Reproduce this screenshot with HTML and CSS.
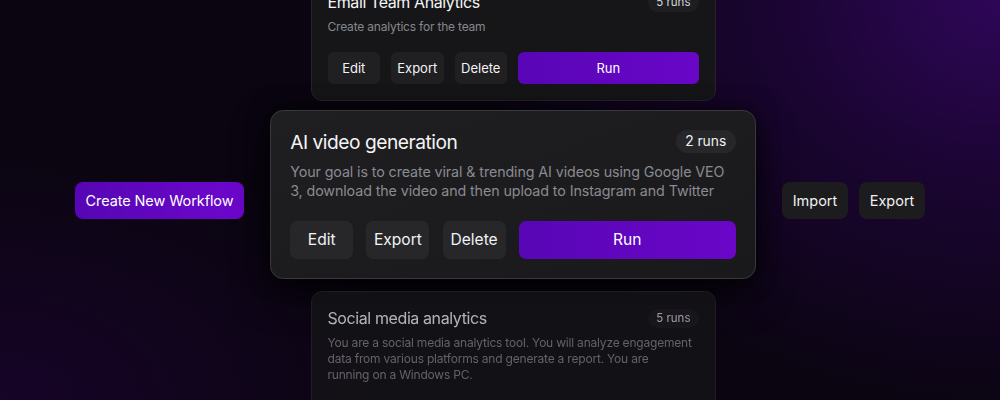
FILE: index.html
```html
<!DOCTYPE html>
<html lang="en">
<head>
<meta charset="utf-8">
<title>Workflows</title>
<link rel="stylesheet" href="styles.css">
</head>
<body>
<main class="stage">
  <button class="btn-primary create">Create New Workflow</button>

  <section class="stack">
    <article class="card side top">
      <header class="card-head">
        <h2 class="card-title">Email Team Analytics</h2>
        <span class="badge">5 runs</span>
      </header>
      <p class="card-desc">Create analytics for the team</p>
      <div class="actions">
        <button class="btn">Edit</button>
        <button class="btn">Export</button>
        <button class="btn">Delete</button>
        <button class="btn run">Run</button>
      </div>
    </article>

    <article class="card focus">
      <header class="card-head">
        <h2 class="card-title">AI video generation</h2>
        <span class="badge">2 runs</span>
      </header>
      <p class="card-desc">Your goal is to create viral &amp; trending AI videos using Google VEO 3, download the video and then upload to Instagram and Twitter</p>
      <div class="actions">
        <button class="btn">Edit</button>
        <button class="btn">Export</button>
        <button class="btn">Delete</button>
        <button class="btn run">Run</button>
      </div>
    </article>

    <article class="card side bottom">
      <header class="card-head">
        <h2 class="card-title">Social media analytics</h2>
        <span class="badge">5 runs</span>
      </header>
      <p class="card-desc">You are a social media analytics tool. You will analyze engagement data from various platforms and generate a report. You are<br>running on a Windows PC.</p>
      <div class="actions">
        <button class="btn">Edit</button>
        <button class="btn">Export</button>
        <button class="btn">Delete</button>
        <button class="btn run">Run</button>
      </div>
    </article>
  </section>

  <div class="tools">
    <button class="btn-dark">Import</button>
    <button class="btn-dark">Export</button>
  </div>
</main>
</body>
</html>
```

FILE: styles.css
```css
* { box-sizing: border-box; }

html, body {
  margin: 0;
  padding: 0;
  width: 1000px;
  height: 400px;
  overflow: hidden;
}

body {
  font-family: Inter, "Noto Sans", sans-serif;
  color: #f4f4f5;
  background:
    radial-gradient(ellipse 520px 420px at 100% 0%, rgba(48, 6, 92, 0.95) 0%, rgba(36, 5, 70, 0.6) 45%, rgba(20, 4, 38, 0) 100%),
    radial-gradient(ellipse 420px 260px at 0% 100%, rgba(26, 4, 46, 0.8) 0%, rgba(20, 4, 36, 0) 100%),
    #0a0510;
}

button {
  font-family: inherit;
  border: 0;
  cursor: pointer;
}

.stage {
  width: 1000px;
  height: 400px;
  display: flex;
  justify-content: center;
  align-items: center;
  gap: 26px;
}

.btn-primary {
  height: 37px;
  padding: 0;
  border-radius: 8px;
  font-size: 14.5px;
  letter-spacing: -0.1px;
  white-space: nowrap;
  color: #fff;
  background: linear-gradient(90deg, #5606b4 0%, #6d07cc 100%);
}

.create { width: 169px; }

.tools {
  display: flex;
  gap: 11px;
}

.btn-dark {
  width: 66px;
  height: 37px;
  border-radius: 8px;
  font-size: 14.5px;
  color: #f0f0f2;
  background: #1c1c1f;
}

.stack {
  align-self: flex-start;
  margin-top: -25px;
  display: flex;
  flex-direction: column;
  align-items: center;
}

.card {
  width: 405px;
  padding: 16px;
  border-radius: 11px;
  background: #161618;
  border: 1px solid #26262a;
}

.card.top { margin-bottom: 9px; }
.card.bottom { margin-top: 12px; filter: blur(0.7px); opacity: 0.72; }

.card.focus {
  zoom: 1.2;
  background: linear-gradient(160deg, #1f1f22 0%, #19191c 100%);
  border: 1.5px solid #3a3a3e;
  box-shadow: 0 12px 30px rgba(0, 0, 0, 0.7), 0 0 18px rgba(0, 0, 0, 0.5);
}

.card-head {
  display: flex;
  justify-content: space-between;
  align-items: center;
  height: 20px;
}

.card-title {
  margin: 0;
  font-size: 16px;
  font-weight: 400;
  letter-spacing: -0.4px;
  line-height: 20px;
  color: #f4f4f5;
}

.badge {
  height: 19px;
  line-height: 19px;
  padding: 0 8px;
  border-radius: 10px;
  font-size: 11.5px;
  color: #f0f0f2;
  background: #27272a;
}

.side .badge { background: #1e1e21; color: #d6d6d8; }

.card-desc {
  margin: 7px 0 0;
  font-size: 12px;
  letter-spacing: -0.2px;
  line-height: 16px;
  color: #86868c;
}

.focus .card-desc {
  font-size: 11.9px;
  letter-spacing: -0.08px;
  line-height: 16px;
  color: #8a8a90;
}

.actions {
  margin-top: 16.7px;
  display: grid;
  grid-template-columns: 52.5px 52.5px 52.5px 1fr;
  gap: 11px;
}

.btn {
  height: 32px;
  padding: 0;
  border-radius: 6px;
  font-size: 13px;
  color: #f2f2f4;
  background: #27272a;
}

.side .btn { background: #202023; }

.btn.run {
  color: #fff;
  background: linear-gradient(90deg, #5806b6 0%, #6a06c8 100%);
}
```
